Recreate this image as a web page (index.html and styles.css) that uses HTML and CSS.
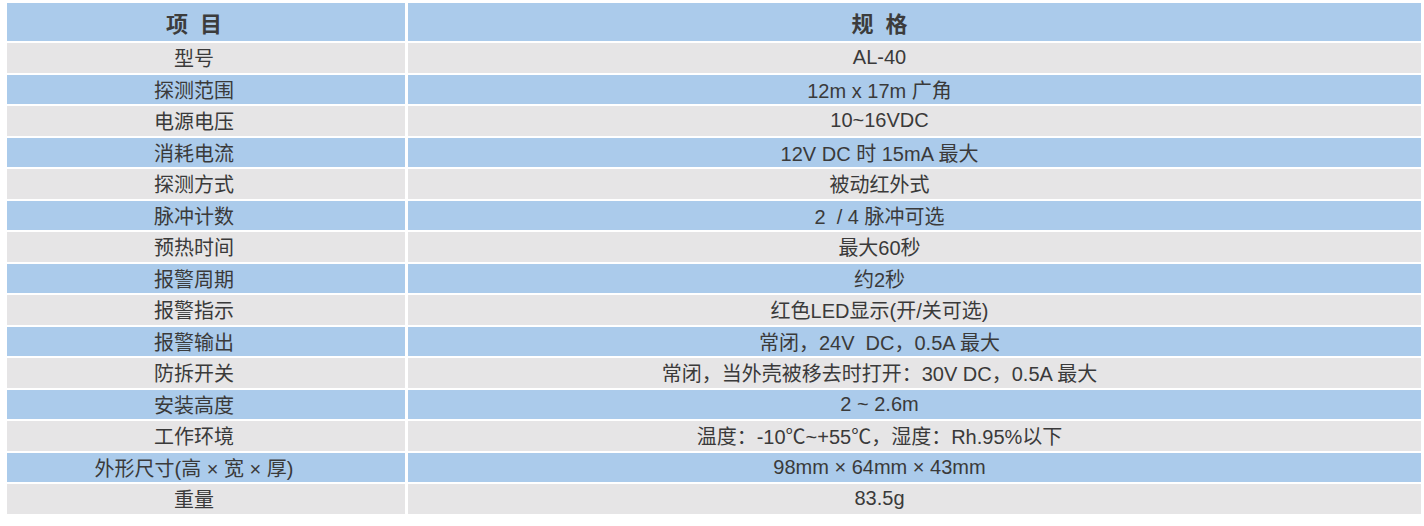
FILE: index.html
```html
<!DOCTYPE html>
<html lang="zh-CN">
<head>
<meta charset="utf-8">
<title>AL-40 规格</title>
<link rel="stylesheet" href="styles.css">
</head>
<body>
<div class="spec">
  <div class="cell head left">项&nbsp;&nbsp;目</div><div class="cell head right">规&nbsp;&nbsp;格</div>
  <div class="cell gray left">型号</div><div class="cell gray right">AL-40</div>
  <div class="cell blue left">探测范围</div><div class="cell blue right">12m x 17m 广角</div>
  <div class="cell gray left">电源电压</div><div class="cell gray right">10~16VDC</div>
  <div class="cell blue left">消耗电流</div><div class="cell blue right">12V DC 时 15mA 最大</div>
  <div class="cell gray left">探测方式</div><div class="cell gray right">被动红外式</div>
  <div class="cell blue left">脉冲计数</div><div class="cell blue right">2&nbsp; / 4 脉冲可选</div>
  <div class="cell gray left">预热时间</div><div class="cell gray right">最大60秒</div>
  <div class="cell blue left">报警周期</div><div class="cell blue right">约2秒</div>
  <div class="cell gray left">报警指示</div><div class="cell gray right">红色LED显示(开/关可选)</div>
  <div class="cell blue left">报警输出</div><div class="cell blue right">常闭，24V&nbsp; DC，0.5A 最大</div>
  <div class="cell gray left">防拆开关</div><div class="cell gray right">常闭，当外壳被移去时打开：30V DC，0.5A 最大</div>
  <div class="cell blue left">安装高度</div><div class="cell blue right">2 ~ 2.6m</div>
  <div class="cell gray left">工作环境</div><div class="cell gray right">温度：-10℃~+55℃，湿度：Rh.95%以下</div>
  <div class="cell blue left">外形尺寸(高 × 宽 × 厚)</div><div class="cell blue right">98mm × 64mm × 43mm</div>
  <div class="cell gray left">重量</div><div class="cell gray right">83.5g</div>
</div>
</body>
</html>
```

FILE: styles.css
```css
html, body {
  margin: 0;
  padding: 0;
  background: #ffffff;
}
body {
  padding: 3px 0 0 7px;
  font-family: "Liberation Sans", Arial, "Noto Sans CJK SC", sans-serif;
  color: #3a3a3a;
}
.spec {
  display: grid;
  grid-template-columns: 398px 1013px;
  grid-template-rows: 38px;
  grid-auto-rows: 29.5px;
  column-gap: 3px;
  row-gap: 2px;
  width: 1414px;
}
.cell {
  display: flex;
  align-items: center;
  justify-content: center;
  font-size: 20px;
  white-space: nowrap;
}
.left {
  padding-right: 24px;
}
.right {
  padding-right: 70px;
}
.head {
  background: #abcbeb;
  font-weight: bold;
  font-size: 22px;
  color: #3c3c3c;
}
.blue {
  background: #abcbeb;
}
.gray {
  background: #e6e5e6;
}
```
